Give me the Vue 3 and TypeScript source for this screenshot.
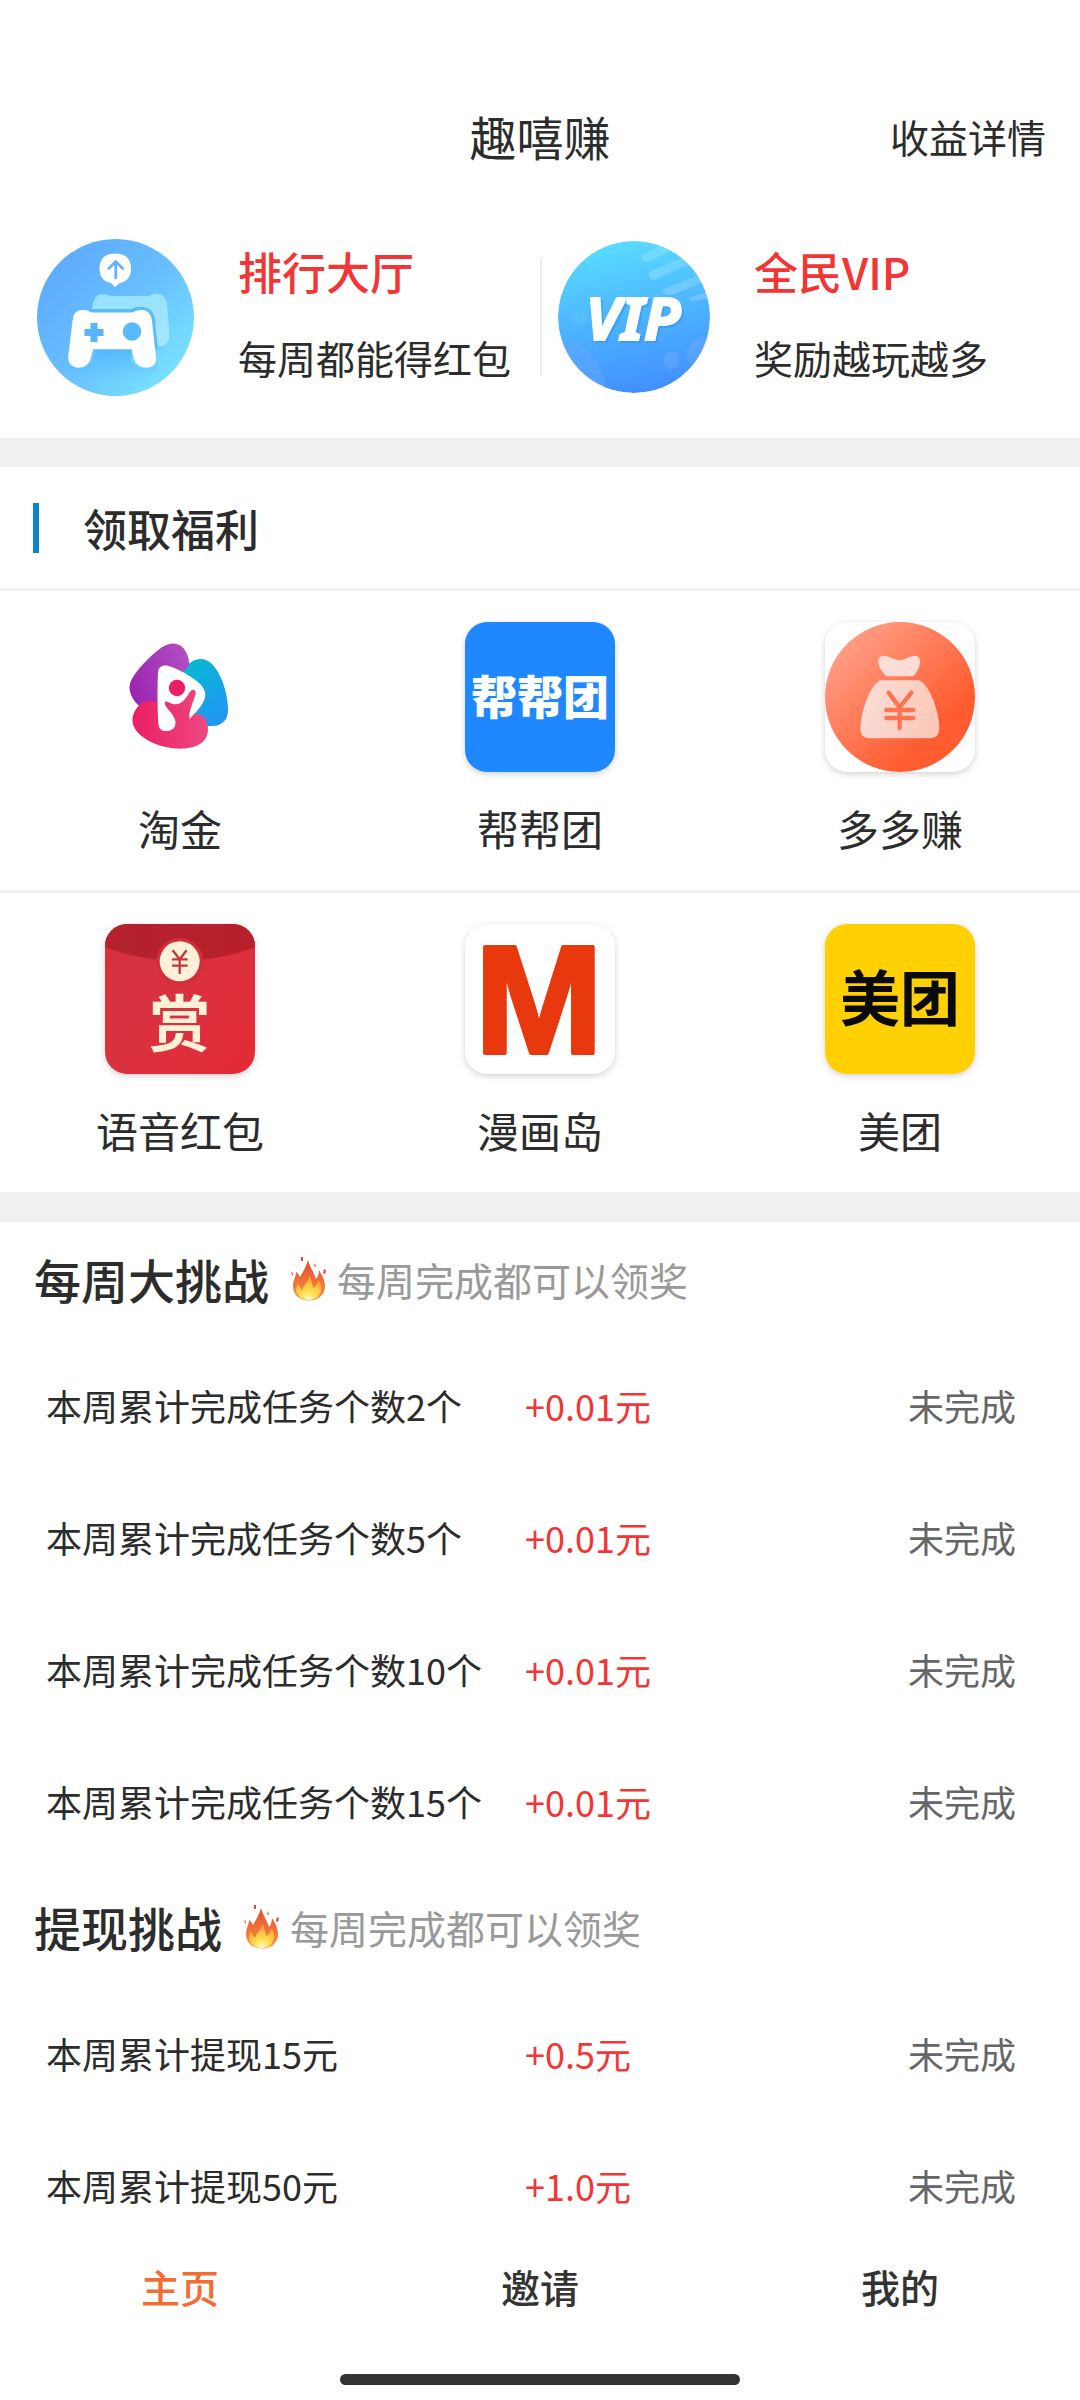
<script setup lang="ts">
interface Task {
  name: string
  reward: string
  status: string
}
interface Challenge {
  title: string
  hint: string
  tasks: Task[]
}

const undone = '未完成'

const apps: { id: string; label: string; flat?: boolean }[] = [
  { id: 'taojin', label: '淘金', flat: true },
  { id: 'bangbang', label: '帮帮团' },
  { id: 'duoduo', label: '多多赚' },
  { id: 'voice', label: '语音红包' },
  { id: 'comic', label: '漫画岛' },
  { id: 'meituan', label: '美团' },
]

const challenges: Challenge[] = [
  {
    title: '每周大挑战',
    hint: '每周完成都可以领奖',
    tasks: [2, 5, 10, 15].map((n) => ({
      name: `本周累计完成任务个数${n}个`,
      reward: '+0.01元',
      status: undone,
    })),
  },
  {
    title: '提现挑战',
    hint: '每周完成都可以领奖',
    tasks: [
      { name: '本周累计提现15元', reward: '+0.5元', status: undone },
      { name: '本周累计提现50元', reward: '+1.0元', status: undone },
    ],
  },
]

const tabs = ['主页', '邀请', '我的']
</script>

<template>
  <div class="page">
    <header class="topbar">
      <h1 class="title">趣嘻赚</h1>
      <a class="detail" href="#income">收益详情</a>
    </header>

    <section class="promos">
      <a class="promo" href="#rank">
        <svg class="promo-icon" viewBox="0 0 157 157" aria-hidden="true">
          <defs>
            <linearGradient id="padBg" x1="0.1" y1="0.2" x2="0.85" y2="0.9">
              <stop offset="0" stop-color="#5eacff" />
              <stop offset="0.5" stop-color="#67bffe" />
              <stop offset="1" stop-color="#79e2ff" />
            </linearGradient>
            <linearGradient id="padShade" x1="0" y1="0" x2="0" y2="1">
              <stop offset="0" stop-color="#4bb4fb" stop-opacity="0.75" />
              <stop offset="1" stop-color="#5cc4fd" stop-opacity="0" />
            </linearGradient>
            <linearGradient id="padBack" x1="0" y1="0" x2="0" y2="1">
              <stop offset="0" stop-color="#96e2ff" />
              <stop offset="1" stop-color="#a6e6ff" />
            </linearGradient>
          </defs>
          <circle cx="78.500" cy="78.500" r="78.500" fill="url(#padBg)" />
          <path d="M34 118 Q43 138 58 122 V110 H94 V122 Q106 138 118 118 L122 132 Q78 156 32 132Z" fill="url(#padShade)" />
          <path d="M78 14.500 c10 0 16 5 16 15 c0 9-5 13.500-11 14.500 l-5 4 l-4-4 c-7-1-11.500-6-11.500-14.500 c0-10 6-15 15.500-15z" fill="#fff" />
          <path d="M78.700 39 V23 M71.800 29.500 L78.700 22.500 L85.700 29.500" fill="none" stroke="#62b1fd" stroke-width="2.600" stroke-linecap="round" stroke-linejoin="round" />
          <path d="M55 73 L56 64 Q58 55 66 55 Q69 55 73 57 H112 Q117 54 122 55 Q129 57 130 64 L132.500 97 Q132 107 122 107 H112 L108 73Z" fill="url(#padBack)" />
          <path d="M50 73 L54 70 H94 Q103 66 110 69 Q117 72 118 80 L121 112 L110 100 L95 80Z" fill="#57bdfb" />
          <path d="M35.500 82 Q36.500 70.700 46 70.700 Q51 70.700 54.500 73.500 H95 Q100 70.500 106 71 Q114 72 115 82 L119 119 Q119.500 128.700 109 128.700 Q99 128.500 96.500 119 L95 110.300 H56 L54 119 Q51 128.500 42 128.700 Q31 128 31.200 118Z" fill="#fff" />
          <path d="M53.500 84 h7 v6 h6 v7 h-6 v6 h-7 v-6 h-6 v-7 h6z" fill="#59b4fc" />
          <circle cx="95" cy="92.500" r="9.300" fill="#59bafc" />
        </svg>
        <span class="promo-copy">
          <strong class="promo-name">排行大厅</strong>
          <span class="promo-sub">每周都能得红包</span>
        </span>
      </a>
      <a class="promo second" href="#vip">
        <svg class="promo-icon vip" viewBox="0 0 152 152" aria-hidden="true">
          <defs>
            <linearGradient id="vipBg" x1="0.4" y1="0" x2="0.6" y2="1">
              <stop offset="0" stop-color="#59dcff" />
              <stop offset="0.5" stop-color="#4cb4ff" />
              <stop offset="1" stop-color="#428eff" />
            </linearGradient>
            <linearGradient id="vipRay" x1="0" y1="1" x2="1" y2="0">
              <stop offset="0" stop-color="#fff" stop-opacity="0.24" />
              <stop offset="1" stop-color="#fff" stop-opacity="0.1" />
            </linearGradient>
            <clipPath id="vipClip"><circle cx="76" cy="76" r="76" /></clipPath>
          </defs>
          <g clip-path="url(#vipClip)">
            <circle cx="76" cy="76" r="76" fill="url(#vipBg)" />
            <path d="M84 14 L112 0 L120 7 L88 21 Q82 20 84 14Z M91 31 L126 16 L132 23 L96 39 Q90 38 91 31Z M104 49 L141 34 L145 41 L114 54 Q105 54 104 49Z M130 57 L152 50 V57 L134 60Z" fill="url(#vipRay)" />
            <path d="M-4 108 Q14 94 28 108 Q48 126 49 156 H-4Z" fill="#69a6ff" opacity="0.45" />
            <rect x="13" y="70" width="16" height="14" rx="6" fill="#73c2ff" opacity="0.25" />
            <rect x="106" y="111" width="15" height="17" rx="6" fill="#73b0ff" opacity="0.4" />
            <path d="M129 118 Q126 104 140 98 L156 94 V130 Q136 136 129 118Z" fill="#73b0ff" opacity="0.35" />
          </g>
          <text class="vip-text shade" x="77" y="101" text-anchor="middle">VIP</text>
          <text class="vip-text" x="75" y="99" text-anchor="middle">VIP</text>
        </svg>
        <span class="promo-copy">
          <strong class="promo-name">全民VIP</strong>
          <span class="promo-sub">奖励越玩越多</span>
        </span>
      </a>
    </section>

    <section class="benefits">
      <h2 class="benefits-title">领取福利</h2>
      <div class="grid">
        <a v-for="app in apps" :key="app.id" class="app" :href="'#' + app.id">
          <span class="tile" :class="[app.id, { flat: app.flat }]">
            <svg v-if="app.id === 'taojin'" viewBox="45 66 450 450" aria-hidden="true">
              <defs>
                <linearGradient id="tjPurple" x1="0" y1="0.6" x2="1" y2="0.2">
                  <stop offset="0" stop-color="#9c27b0" />
                  <stop offset="1" stop-color="#b14fc2" />
                </linearGradient>
                <linearGradient id="tjBlue" x1="0.2" y1="0" x2="0.5" y2="1">
                  <stop offset="0" stop-color="#06b9d4" />
                  <stop offset="1" stop-color="#2196f3" />
                </linearGradient>
                <linearGradient id="tjPink" gradientUnits="userSpaceOnUse" x1="126" y1="370" x2="354" y2="370">
                  <stop offset="0" stop-color="#ea1e63" />
                  <stop offset="1" stop-color="#ee4980" />
                </linearGradient>
              </defs>
              <path d="M280 216 C286 198 306 178 330 177 C352 176 370 192 384 216 C402 248 414 290 414 330 C414 360 396 378 366 378 L340 378 L300 320Z" fill="url(#tjBlue)" />
              <path d="M148 318 C126 300 114 270 120 252 C128 220 184 164 216 142 C238 126 264 126 280 144 C292 160 298 174 297 196 L280 216 L240 300Z" fill="url(#tjPurple)" />
              <path d="M146 318 C160 302 180 302 200 304 L250 300 L316 341 C336 340 352 356 354 384 C356 430 316 446 268 446 C216 446 166 424 142 396 C120 370 124 340 146 318Z" fill="url(#tjPink)" />
              <path d="M204 216 C206 198 222 194 236 198 C264 206 312 232 334 256 C350 276 350 294 334 316 C324 332 310 344 299 357 L257 368 C256 386 242 394 226 393 C212 392 206 384 205 368 C202 320 202 260 204 216Z" fill="#fff" />
              <path d="M225 305 C234 303 242 313 256 313 C274 312 286 298 298 278 C304 268 314 266 317 276 C318 286 310 300 304 320 C300 332 296 344 299 357 L296 390 H250 C256 384 258 376 257 368 C256 356 250 346 238 332 C230 322 222 314 225 305Z" fill="url(#tjPink)" />
              <circle cx="261" cy="264" r="24.500" fill="#e91e63" />
            </svg>

            <svg v-else-if="app.id === 'bangbang'" viewBox="0 0 150 150" aria-hidden="true">
              <text class="logo-text white" x="75" y="92" text-anchor="middle">帮帮团</text>
            </svg>

            <svg v-else-if="app.id === 'duoduo'" viewBox="45 66 450 450" aria-hidden="true">
              <defs>
                <linearGradient id="ddBg" x1="0.1" y1="0.15" x2="0.7" y2="0.75">
                  <stop offset="0" stop-color="#ff9e85" />
                  <stop offset="1" stop-color="#ff5c31" />
                </linearGradient>
                <linearGradient id="ddBag" x1="0" y1="0" x2="1" y2="0.3">
                  <stop offset="0" stop-color="#f9dfd8" />
                  <stop offset="1" stop-color="#fbc9ba" />
                </linearGradient>
              </defs>
              <circle cx="270" cy="291" r="225" fill="url(#ddBg)" />
              <path d="M205 190 C202 172 214 164 228 168 C244 172 252 180 268 180 C284 180 292 172 308 168 C322 164 332 172 330 190 C328 204 320 216 314 224 Q310 229 302 229 H236 Q228 229 224 224 C216 214 208 204 205 190Z" fill="#f9ddd6" />
              <path d="M212 241 H326 C358 252 386 330 388 384 C388 404 378 415 358 415 H182 C160 415 150 404 151 384 C154 330 180 254 212 241Z" fill="url(#ddBag)" />
              <path d="M236 278 L269 322 L304 278 M229 330 H310 M229 354 H310 M269 324 V384" fill="none" stroke="#ff7350" stroke-width="13" stroke-linecap="round" stroke-linejoin="round" />
            </svg>

            <svg v-else-if="app.id === 'voice'" viewBox="75 132 450 450" aria-hidden="true">
              <defs>
                <linearGradient id="voBg" x1="0" y1="0" x2="1" y2="0.8">
                  <stop offset="0" stop-color="#d33240" />
                  <stop offset="0.5" stop-color="#da313f" />
                  <stop offset="1" stop-color="#e32b37" />
                </linearGradient>
                <linearGradient id="voFlap" x1="0" y1="0" x2="1" y2="0">
                  <stop offset="0" stop-color="#b3222e" />
                  <stop offset="1" stop-color="#b8202b" />
                </linearGradient>
              </defs>
              <rect x="75" y="132" width="450" height="450" fill="url(#voBg)" />
              <path d="M75 132 H525 V202 Q420 242 300 242 Q180 242 75 202Z" fill="url(#voFlap)" />
              <circle cx="299" cy="245" r="71" fill="#d42e3b" />
              <circle cx="299" cy="244" r="60" fill="#fdf1d8" />
              <path d="M278 211 L299 238 L320 211 M276 238 H323 M276 257 H323 M299 238 V282" fill="none" stroke="#c4383c" stroke-width="7" />
              <text class="reward-text" x="299" y="502" text-anchor="middle">赏</text>
            </svg>

            <svg v-else-if="app.id === 'comic'" viewBox="0 0 150 150" aria-hidden="true">
              <text class="comic-text" x="74" y="129" text-anchor="middle">M</text>
            </svg>

            <svg v-else viewBox="0 0 150 150" aria-hidden="true">
              <text class="logo-text black" x="75" y="97" text-anchor="middle">美团</text>
            </svg>
          </span>
          <span class="app-label">{{ app.label }}</span>
        </a>
      </div>
    </section>

    <main class="challenges">
      <section v-for="group in challenges" :key="group.title">
        <div class="group-head">
          <h2 class="group-title">{{ group.title }}</h2>
          <svg class="flame" viewBox="0 0 36 44" aria-hidden="true">
            <defs>
              <linearGradient id="flameOut" x1="0" y1="0" x2="0" y2="1">
                <stop offset="0" stop-color="#dd4a30" />
                <stop offset="0.5" stop-color="#f26f3a" />
                <stop offset="1" stop-color="#f9963c" />
              </linearGradient>
              <radialGradient id="flameIn" cx="0.5" cy="0.95" r="0.85">
                <stop offset="0" stop-color="#fffbd6" />
                <stop offset="0.3" stop-color="#ffe458" />
                <stop offset="0.7" stop-color="#fcc23c" />
                <stop offset="1" stop-color="#f79a3a" />
              </radialGradient>
            </defs>
            <path d="M17 3 C18 8 21 12 23 17 L25 22 C27 20 28 16 28 13 C31 18 34 23 34 29 C34 38 27 43.500 18 43.500 C9 43.500 2 38 2 29 C2 23 5 20 5 15 C7 16 8 18 9 20 C12 15 15 10 17 3Z" fill="url(#flameOut)" />
            <path d="M19 18 C19 22 22 26 22 31 C25 29 27 26 28 23 C29 27 31 29 30 33 C29 39 25 43 18 43 C11 43 6 39 5 34 C5 31 6 29 7 26 C8 29 9 31 11 33 C13 27 17 25 19 18Z" fill="url(#flameIn)" />
            <path d="M10 0 h2 v4 h-2z M24 6 l1 4 l-2-1z M33 12 l2 1 l-1 4 l-2-1z M0 15 l2 1 l0 3z" fill="#dc4a35" />
          </svg>
          <span class="group-hint">{{ group.hint }}</span>
        </div>
        <table class="tasks">
          <tbody>
            <tr v-for="task in group.tasks" :key="task.name">
              <td class="task-name">{{ task.name }}</td>
              <td class="task-reward">{{ task.reward }}</td>
              <td class="task-status">{{ task.status }}</td>
            </tr>
          </tbody>
        </table>
      </section>
    </main>

    <nav class="tabs">
      <button v-for="(tab, i) in tabs" :key="tab" type="button" class="tab" :class="{ active: i === 0 }">
        {{ tab }}
      </button>
    </nav>
    <div class="home-bar"></div>
  </div>
</template>

<style>
body {
  margin: 0;
  background: #fff;
}
</style>

<style scoped>
.page {
  display: flex;
  flex-direction: column;
  min-height: 100vh;
  background: #fff;
  color: #2c2c2c;
  font-family: "Noto Sans CJK SC", sans-serif;
}
a {
  color: inherit;
  text-decoration: none;
}
h1,
h2 {
  margin: 0;
}

.topbar {
  display: grid;
  grid-template-columns: 1fr auto 1fr;
  align-items: center;
  height: 120px;
  margin-top: 76px;
  padding: 0 34px;
}
.title {
  grid-column: 2;
  font-size: 47px;
  line-height: 60px;
  font-weight: 400;
}
.detail {
  justify-self: end;
  font-size: 39px;
  line-height: 60px;
}

.promos {
  display: grid;
  grid-template-columns: 1fr 1fr;
  align-items: center;
  height: 242px;
}
.promo {
  display: flex;
  align-items: center;
  gap: 44px;
  height: 118px;
  padding-left: 37px;
  white-space: nowrap;
}
.promo.second {
  padding-left: 16px;
  border-left: 2px solid #ececec;
}
.promo-icon {
  flex: none;
  width: 157px;
  height: 157px;
}
.promo-icon.vip {
  width: 152px;
  height: 152px;
}
.promo-copy {
  display: flex;
  flex-direction: column;
  gap: 26px;
  padding-bottom: 6px;
}
.promo-name {
  color: #f23636;
  font-size: 44px;
  line-height: 60px;
  font-weight: 500;
}
.promo-sub {
  font-size: 39px;
  line-height: 60px;
}
.vip-text {
  fill: #fff;
  stroke: #fff;
  stroke-width: 2px;
  font: italic 700 60px "Noto Sans", sans-serif;
}
.vip-text.shade {
  fill: #2f7fe8;
  stroke: #2f7fe8;
  opacity: 0.35;
}

.benefits {
  border-top: 29px solid #f0f0f0;
  border-bottom: 30px solid #f0f0f0;
}
.benefits-title {
  display: flex;
  align-items: center;
  height: 121px;
  padding-left: 33px;
  font-size: 44px;
  font-weight: 500;
}
.benefits-title::before {
  content: "";
  width: 6px;
  height: 50px;
  margin-right: 44px;
  background: #0a84c8;
}
.grid {
  display: grid;
  grid-template-columns: repeat(3, 1fr);
}
.app {
  display: flex;
  flex-direction: column;
  align-items: center;
  gap: 26px;
  padding: 31px 0 32px;
  border-top: 3px solid #f0f0f0;
}
.tile {
  width: 150px;
  height: 150px;
  border-radius: 22px;
  background: #fff;
  box-shadow: 0 2px 6px rgba(0, 0, 0, 0.18);
  overflow: hidden;
}
.tile.flat {
  box-shadow: none;
}
.tile.bangbang {
  background: #2088ff;
}
.tile.meituan {
  background: #ffd103;
}
.tile svg {
  display: block;
  width: 150px;
  height: 150px;
}
.tile.comic,
.tile.comic svg {
  overflow: visible;
}
.logo-text {
  font-family: "Noto Sans CJK SC", sans-serif;
}
.logo-text.white {
  fill: #fff;
  font-size: 46px;
  font-weight: 900;
}
.logo-text.black {
  fill: #0a0a0a;
  font-size: 60px;
  font-weight: 700;
}
.reward-text {
  fill: #fdf1d8;
  font: 700 184px "Noto Sans CJK SC", sans-serif;
}
.comic-text {
  fill: #e8380d;
  stroke: #e8380d;
  stroke-width: 4px;
  stroke-linejoin: round;
  font: 700 154px "Liberation Sans Narrow", "Liberation Sans", sans-serif;
}
.app-label {
  font-size: 42px;
  line-height: 60px;
}

.group-head {
  display: flex;
  align-items: center;
  height: 114px;
  padding: 0 0 6px 34px;
}
.group-title {
  font-size: 47px;
  line-height: 60px;
  font-weight: 500;
}
.flame {
  width: 36px;
  height: 44px;
  margin: 0 10px 0 22px;
}
.group-hint {
  color: #999;
  font-size: 39px;
  line-height: 60px;
}
.tasks {
  width: 100%;
  border-collapse: collapse;
  font-size: 36px;
  line-height: 60px;
}
.tasks td {
  height: 126px;
  padding: 0 0 6px;
  white-space: nowrap;
}
.tasks .task-name {
  width: 479px;
  padding-left: 46px;
}
.tasks .task-reward {
  color: #f23636;
}
.tasks .task-status {
  padding-right: 64px;
  color: #666;
  text-align: right;
}

.tabs {
  display: grid;
  grid-template-columns: repeat(3, 1fr);
  margin-top: auto;
}
.tab {
  height: 70px;
  padding: 0 0 6px;
  border: 0;
  background: none;
  color: #333;
  font-family: inherit;
  font-size: 39px;
  font-weight: 500;
  line-height: 60px;
}
.tab.active {
  color: #f26c35;
}
.home-bar {
  width: 37%;
  height: 11px;
  margin: 50px auto 16px;
  border-radius: 6px;
  background: #333;
}
</style>
